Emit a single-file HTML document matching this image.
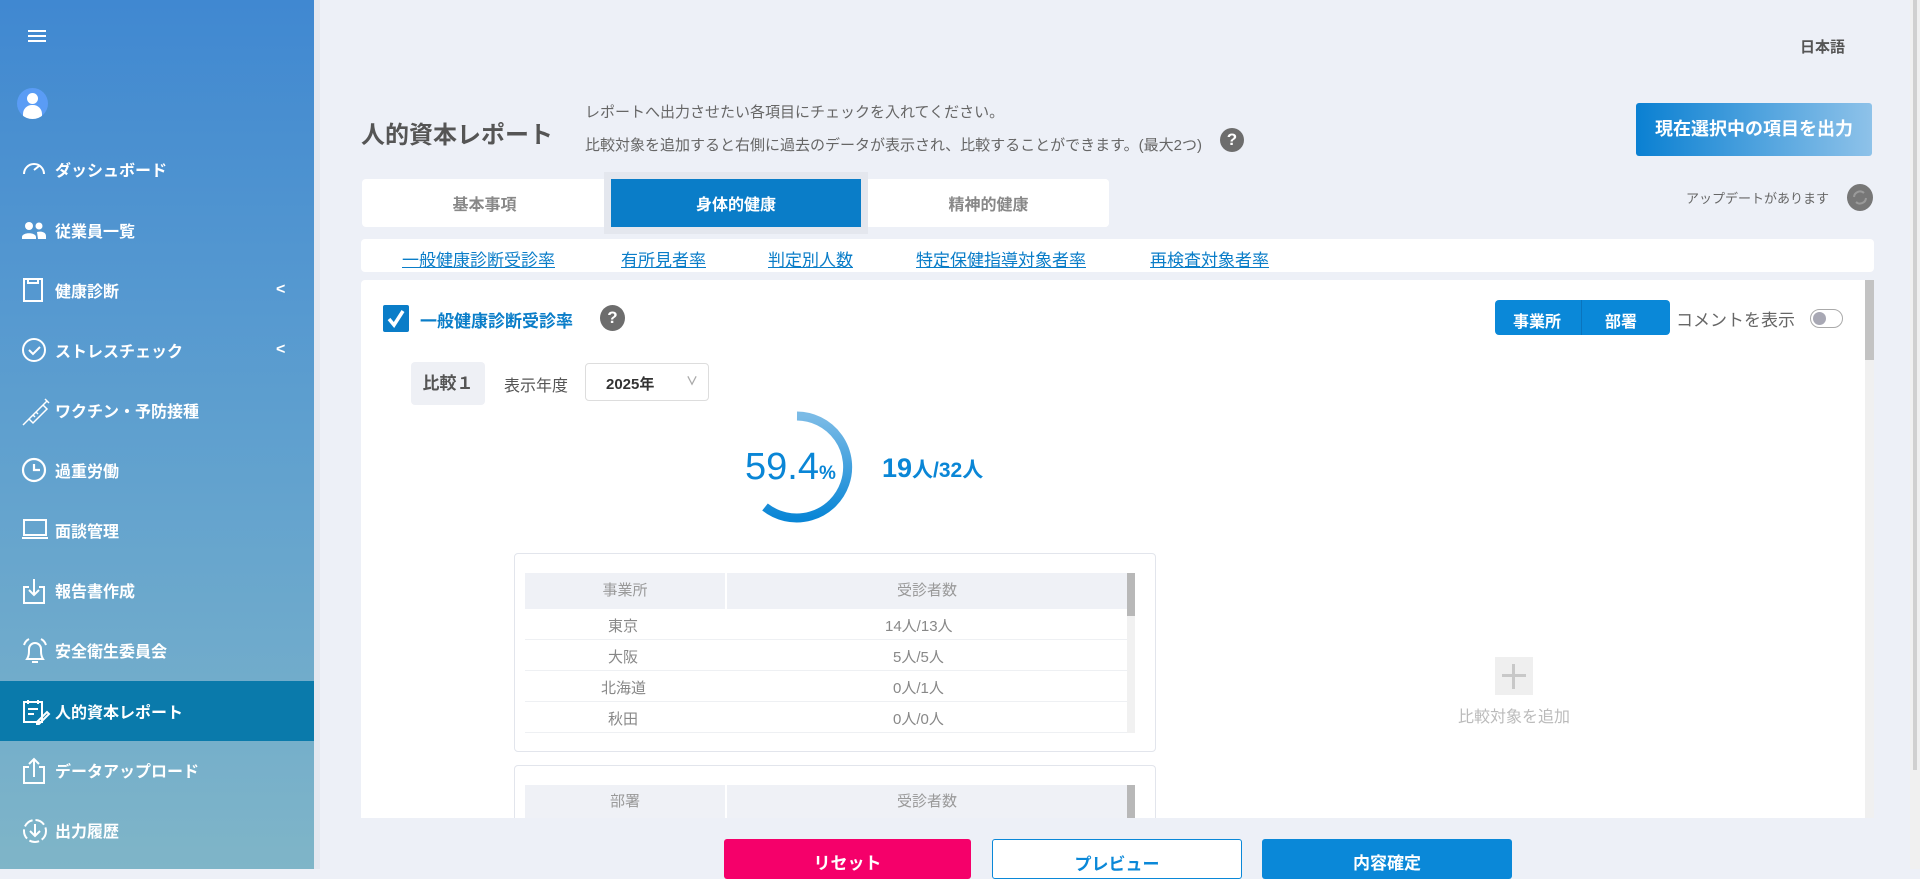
<!DOCTYPE html>
<html><head><meta charset="utf-8"><style>
*{box-sizing:border-box;margin:0;padding:0}
body{width:1920px;height:869px;overflow:hidden;background:#edf0f7;font-family:"Liberation Sans","Noto Sans CJK JP",sans-serif;position:relative;color:#555}
.abs{position:absolute}
#side{left:0;top:0;width:314px;height:869px;background:linear-gradient(180deg,#4088d1 0%,#5fa0cf 50%,#7fb5c8 100%)}
.mi{position:absolute;left:0;width:314px;height:60px;color:#fff;font-weight:bold;font-size:16px;display:flex;align-items:center;padding-left:55px}
.mi svg{position:absolute;left:21px;top:17px}
.mi .chev{position:absolute;left:276px;font-size:16px}
.act{background:#0a7aab}
.tab{position:absolute;top:179px;height:48px;display:flex;align-items:center;justify-content:center;font-size:16px;font-weight:bold;color:#888}
.sub a{position:absolute;top:246px;color:#0a7dc8;text-decoration:underline;font-size:17px}
.th{background:#eff1f6;color:#999;font-size:15px}
.row{position:absolute;left:525px;width:602px;height:31px;border-bottom:1px solid #eef0f3;font-size:15px;color:#888}
.row span{position:absolute;top:6px}
.btn{position:absolute;top:839px;height:40px;border-radius:3px;font-weight:bold;font-size:17px;display:flex;justify-content:center;padding-top:10px}
</style></head><body>
<div id="side" class="abs">
 <div class="abs" style="left:28px;top:30px;width:18px;height:2px;background:#fff;box-shadow:0 5px 0 #fff,0 10px 0 #fff"></div>
 <div class="abs" style="left:17px;top:88px;width:31px;height:31px;border-radius:50%;background:#5a9cf5;overflow:hidden"><div class="abs" style="left:10px;top:5px;width:11px;height:11px;border-radius:50%;background:#fff"></div><div class="abs" style="left:6px;top:17px;width:19px;height:16px;border-radius:9px 9px 0 0;background:#fff"></div></div>
 <div class="mi" style="top:139px"><svg width="26" height="26" viewBox="0 0 26 26" fill="none" stroke="#fff" stroke-width="2"><path d="M3 18A10 10 0 1 1 23 18"/><path d="M13 14l5-4"/></svg>ダッシュボード</div>
 <div class="mi" style="top:200px"><svg width="26" height="26" viewBox="0 0 26 26" fill="#fff"><circle cx="8" cy="9" r="4"/><circle cx="18" cy="9" r="3.5"/><path d="M1 20c0-5 14-5 14 0v2H1zM16 15c4-1 9 0 9 4v3h-8z"/></svg>従業員一覧</div>
 <div class="mi" style="top:260px"><svg width="26" height="26" viewBox="0 0 26 26" fill="none" stroke="#fff" stroke-width="2"><rect x="3" y="2" width="18" height="22"/><path d="M7 2v4h10V2"/></svg>健康診断<span class="chev">&lt;</span></div>
 <div class="mi" style="top:320px"><svg width="28" height="26" viewBox="0 0 28 26" fill="none" stroke="#fff" stroke-width="2"><circle cx="13" cy="13" r="11"/><path d="M8 13l4 4 7-7"/></svg>ストレスチェック<span class="chev">&lt;</span></div>
 <div class="mi" style="top:380px"><svg width="30" height="30" viewBox="0 0 30 30" fill="none" stroke="#fff" stroke-width="1.5"><path d="M2 28l6-6M8 22l14-14 4 4-14 14zM22 8l4-4M24 2l4 4M12 18l2 2M15 15l2 2"/></svg>ワクチン・予防接種</div>
 <div class="mi" style="top:440px"><svg width="26" height="26" viewBox="0 0 26 26" fill="none" stroke="#fff" stroke-width="2.2"><circle cx="13" cy="13" r="11"/><path d="M13 7v6h6"/></svg>過重労働</div>
 <div class="mi" style="top:500px"><svg width="28" height="24" viewBox="0 0 28 24" fill="none" stroke="#fff" stroke-width="2"><rect x="3" y="3" width="22" height="15"/><path d="M1 21h26"/></svg>面談管理</div>
 <div class="mi" style="top:560px"><svg width="26" height="28" viewBox="0 0 26 28" fill="none" stroke="#fff" stroke-width="2"><path d="M8 10H3v16h20V10h-5M13 2v16M8 13l5 5 5-5"/></svg>報告書作成</div>
 <div class="mi" style="top:620px"><svg width="28" height="28" viewBox="0 0 28 28" fill="none" stroke="#fff" stroke-width="2"><path d="M6 22c2-3 2-6 2-10a6 6 0 0 1 12 0c0 4 0 7 2 10zM11 25h6M3 8c1-3 3-5 5-6M25 8c-1-3-3-5-5-6"/></svg>安全衛生委員会</div>
 <div class="mi act" style="top:681px"><svg width="30" height="28" viewBox="0 0 30 28" fill="none" stroke="#fff" stroke-width="2"><path d="M3 4h18v20H3zM7 2v4M17 2v4M7 11h10M7 16h6M16 24l10-10 2 2-10 10h-2z"/></svg>人的資本レポート</div>
 <div class="mi" style="top:740px"><svg width="26" height="28" viewBox="0 0 26 28" fill="none" stroke="#fff" stroke-width="2"><path d="M8 10H3v16h20V10h-5M13 20V2M8 7l5-5 5 5"/></svg>データアップロード</div>
 <div class="mi" style="top:800px"><svg width="28" height="28" viewBox="0 0 28 28" fill="none" stroke="#fff" stroke-width="2"><circle cx="14" cy="14" r="11" stroke-dasharray="10 3"/><path d="M14 7v12M9 14l5 5 5-5"/></svg>出力履歴</div>
</div>
<div class="abs" style="left:314px;top:0;width:6px;height:869px;background:#e4e8f0"></div>

<div class="abs" style="left:1800px;top:36px;font-size:15px;font-weight:bold;color:#555">日本語</div>
<div class="abs" style="left:361px;top:115px;font-size:24px;font-weight:bold;color:#555">人的資本レポート</div>
<div class="abs" style="left:585px;top:101px;font-size:15px;color:#666">レポートへ出力させたい各項目にチェックを入れてください。</div>
<div class="abs" style="left:585px;top:134px;font-size:15px;color:#666">比較対象を追加すると右側に過去のデータが表示され、比較することができます。(最大2つ)</div>
<div class="abs" style="left:1220px;top:128px;width:24px;height:24px;border-radius:50%;background:#6d6d6d;color:#fff;font-weight:bold;font-size:17px;text-align:center;line-height:24px">?</div>
<div class="abs" style="left:1636px;top:103px;width:236px;height:53px;border-radius:3px;background:linear-gradient(90deg,#0a80d2,#8ec2e9);color:#fff;font-weight:bold;font-size:18px;text-align:center;line-height:53px">現在選択中の項目を出力</div>
<div class="abs" style="left:1686px;top:188px;font-size:13px;color:#666">アップデートがあります</div>
<div class="abs" style="left:1847px;top:184px;width:26px;height:27px;border-radius:50%;background:#777"><svg width="26" height="27" viewBox="0 0 26 27" fill="none" stroke="#9a9a9a" stroke-width="2"><path d="M7 13a6 6 0 0 1 10-4M19 14a6 6 0 0 1-10 4"/></svg></div>

<div class="abs" style="left:362px;top:179px;width:747px;height:48px;background:#fff;border-radius:4px"></div>
<div class="abs" style="left:604px;top:172px;width:264px;height:62px;background:#e4e7ee"></div>
<div class="tab" style="left:362px;width:245px">基本事項</div>
<div class="tab" style="left:611px;width:250px;background:#0a7dc8;color:#fff">身体的健康</div>
<div class="tab" style="left:868px;width:241px;background:#fff;border-radius:0 4px 4px 0">精神的健康</div>

<div class="abs" style="left:361px;top:239px;width:1513px;height:33px;background:#fff;border-radius:4px"></div>
<div class="sub"><a style="left:402px">一般健康診断受診率</a><a style="left:621px">有所見者率</a><a style="left:768px">判定別人数</a><a style="left:916px">特定保健指導対象者率</a><a style="left:1150px">再検査対象者率</a></div>

<div class="abs" style="left:361px;top:280px;width:1504px;height:538px;background:#fff;border-radius:4px 0 0 0"></div>
<div class="abs" style="left:1865px;top:280px;width:9px;height:538px;background:#f0f0f0"><div style="height:80px;background:#c3c3c3"></div></div>
<div class="abs" style="left:383px;top:305px;width:26px;height:27px;background:#0a7dc8;border-radius:2px"><svg width="26" height="27" viewBox="0 0 26 27" fill="none" stroke="#fff" stroke-width="3.5"><path d="M6 14l5 6 9-14"/></svg></div>
<div class="abs" style="left:420px;top:307px;font-size:17px;font-weight:bold;color:#0a7dc8">一般健康診断受診率</div>
<div class="abs" style="left:600px;top:305px;width:25px;height:26px;border-radius:50%;background:#6d6d6d;color:#fff;font-weight:bold;font-size:17px;text-align:center;line-height:26px">?</div>
<div class="abs" style="left:1495px;top:300px;width:175px;height:35px;background:#0a88d8;border-radius:4px;color:#fff;font-weight:bold;font-size:16px"><span class="abs" style="left:18px;top:8px">事業所</span><div class="abs" style="left:86px;top:0;width:1px;height:35px;background:#0a74bd"></div><span class="abs" style="left:110px;top:8px">部署</span></div>
<div class="abs" style="left:1676px;top:306px;font-size:17px;color:#666">コメントを表示</div>
<div class="abs" style="left:1810px;top:309px;width:33px;height:19px;border:1px solid #aaa;border-radius:10px"><div class="abs" style="left:2px;top:2px;width:13px;height:13px;border-radius:50%;background:#a8a8b4"></div></div>

<div class="abs" style="left:411px;top:362px;width:74px;height:43px;background:#eef0f5;border-radius:4px;font-size:17px;font-weight:bold;color:#555;text-align:center;line-height:43px">比較１</div>
<div class="abs" style="left:504px;top:372px;font-size:16px;color:#555">表示年度</div>
<div class="abs" style="left:585px;top:363px;width:124px;height:38px;border:1px solid #ddd;border-radius:4px;font-size:15px;font-weight:bold;color:#333"><span class="abs" style="left:20px;top:9px">2025年</span><span class="abs" style="left:100px;top:8px;color:#aaa;font-size:12px">∨</span></div>

<svg class="abs" style="left:730px;top:400px" width="140" height="140" viewBox="0 0 140 140"><defs><linearGradient id="g" x1="0" y1="0" x2="0" y2="1"><stop offset="0" stop-color="#7bbbe6"/><stop offset="1" stop-color="#0a86d6"/></linearGradient></defs><path d="M67 16A51 51 0 1 1 35 107" fill="none" stroke="url(#g)" stroke-width="9"/></svg>
<div class="abs" style="left:745px;top:446px;font-size:38px;color:#0a86d6">59.4<span style="font-size:19px;font-weight:bold">%</span></div>
<div class="abs" style="left:882px;top:453px;font-size:27px;font-weight:bold;color:#0a86d6">19<span style="font-size:21px">人/32人</span></div>

<div class="abs" style="left:514px;top:553px;width:642px;height:199px;border:1px solid #e2e5ec;border-radius:4px"></div>
<div class="abs th" style="left:525px;top:573px;width:200px;height:36px;text-align:center;line-height:36px">事業所</div>
<div class="abs th" style="left:727px;top:573px;width:400px;height:36px;text-align:center;line-height:36px">受診者数</div>
<div class="abs" style="left:1127px;top:573px;width:8px;height:160px;background:#f1f1f1"><div style="height:43px;background:#b8b8b8"></div></div>
<div class="row" style="top:609px"><span style="left:83px">東京</span><span style="left:360px">14人/13人</span></div>
<div class="row" style="top:640px"><span style="left:83px">大阪</span><span style="left:368px">5人/5人</span></div>
<div class="row" style="top:671px"><span style="left:76px">北海道</span><span style="left:368px">0人/1人</span></div>
<div class="row" style="top:702px"><span style="left:83px">秋田</span><span style="left:368px">0人/0人</span></div>

<div class="abs" style="left:514px;top:765px;width:642px;height:60px;border:1px solid #e2e5ec;border-radius:4px;border-bottom:none"></div>
<div class="abs th" style="left:525px;top:785px;width:200px;height:33px;text-align:center;line-height:33px">部署</div>
<div class="abs th" style="left:727px;top:785px;width:400px;height:33px;text-align:center;line-height:33px">受診者数</div>
<div class="abs" style="left:1127px;top:785px;width:8px;height:33px;background:#b8b8b8"></div>

<div class="abs" style="left:1495px;top:657px;width:38px;height:38px;background:#efefef"><div class="abs" style="left:17px;top:7px;width:3px;height:25px;background:#c8c8c8"></div><div class="abs" style="left:7px;top:17px;width:24px;height:3px;background:#c8c8c8"></div></div>
<div class="abs" style="left:1434px;top:703px;width:160px;text-align:center;font-size:16px;color:#bbb">比較対象を追加</div>

<div class="abs" style="left:320px;top:818px;width:1590px;height:51px;background:#edf0f7"></div>
<div class="btn" style="left:724px;width:247px;background:#f5006a;color:#fff">リセット</div>
<div class="btn" style="left:992px;width:250px;background:#fff;border:1px solid #0a88d8;color:#0a88d8">プレビュー</div>
<div class="btn" style="left:1262px;width:250px;background:#0a88d8;color:#fff">内容確定</div>
<div class="abs" style="left:1910px;top:0;width:10px;height:869px;background:#f0f0f0"><div style="height:770px;background:#d0d0d0;width:4px;margin-left:3px"></div></div>
</body></html>
